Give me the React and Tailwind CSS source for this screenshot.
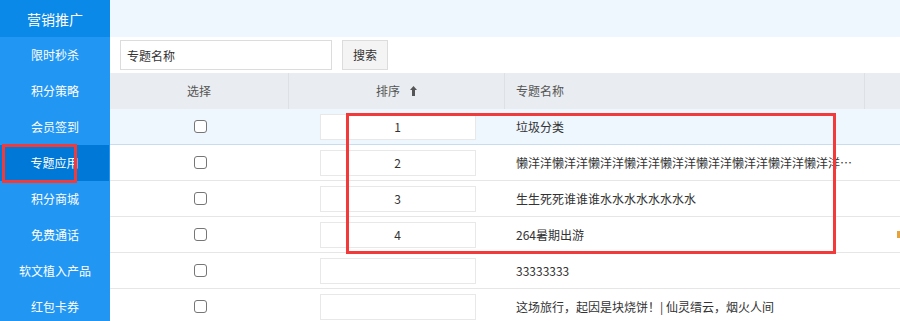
import React from 'react';

const menu = ['限时秒杀', '积分策略', '会员签到', '专题应用', '积分商城', '免费通话', '软文植入产品', '红包卡券'];

const rows = [
  { sort: '1', name: '垃圾分类' },
  { sort: '2', name: '懒洋洋懒洋洋懒洋洋懒洋洋懒洋洋懒洋洋懒洋洋懒洋洋懒洋洋懒洋洋懒洋洋懒洋洋' },
  { sort: '3', name: '生生死死谁谁谁水水水水水水水水' },
  { sort: '4', name: '264暑期出游', mark: true },
  { sort: '', name: '33333333' },
  { sort: '', name: '这场旅行，起因是块烧饼！| 仙灵缙云，烟火人间' },
];

const App = () => {
  return (
    <div className="relative flex h-[321px] w-[900px] overflow-hidden bg-white font-['Noto_Sans_CJK_SC',sans-serif] text-xs text-[#333]">
      {/* sidebar */}
      <div className="w-[110px] shrink-0 bg-[#2196f3] text-white">
        <div className="flex h-[37px] items-center justify-center bg-[#0b89e8] text-sm">营销推广</div>
        {menu.map((m) => (
          <div
            key={m}
            className={
              m === '专题应用'
                ? 'flex h-[36px] items-center justify-center bg-[#0078d8] mr-px'
                : 'flex h-[36px] items-center justify-center'
            }
          >
            {m}
          </div>
        ))}
      </div>

      {/* main */}
      <div className="flex-1 flex flex-col">
        <div className="h-[37px] shrink-0 bg-[#eef6fe]"></div>
        <div className="flex h-[36px] shrink-0 items-center gap-[10px] pl-[10px]">
          <input
            defaultValue="专题名称"
            className="h-[30px] w-[212px] border border-[#dcdcdc] px-[6px] text-xs text-[#333] outline-none"
          />
          <button className="h-[30px] w-[46px] border border-[#dcdcdc] bg-[#f4f4f4] text-xs text-[#333]">搜索</button>
        </div>

        <div className="flex h-[36px] shrink-0 items-center bg-[#e9ecf0] text-[#555]">
          <div className="flex h-full w-[179px] items-center justify-center border-r border-[#dde1e6]">选择</div>
          <div className="flex h-full w-[216px] items-center justify-center gap-[10px] border-r border-[#dde1e6]">
            <span>排序</span>
            <svg width="7" height="10" viewBox="0 0 7 10">
              <path d="M3.5 0 L7 4 L5 4 L5 10 L2 10 L2 4 L0 4 Z" fill="#555" />
            </svg>
          </div>
          <div className="flex h-full w-[360px] items-center border-r border-[#dde1e6] pl-[11px]">专题名称</div>
          <div className="flex-1"></div>
        </div>

        {rows.map((r, i) => (
          <div
            key={i}
            className={
              i === 0
                ? 'flex h-[36px] shrink-0 items-center border-b border-[#c8dcee] bg-[#eef6fe]'
                : 'flex h-[36px] shrink-0 items-center border-b border-[#e6e6e6]'
            }
          >
            <div className="flex w-[180px] justify-center pl-px">
              <span className="block h-[13px] w-[13px] rounded-[3px] border border-[#767676] bg-white"></span>
            </div>
            <div className="flex w-[215px] justify-center">
              <div className="flex h-[26px] w-[156px] items-center justify-center border border-[#e8e8e8] bg-white">{r.sort}</div>
            </div>
            <div className="w-[360px] truncate pl-[11px] pr-[12px]">{r.name}</div>
            <div className="flex flex-1 justify-end">
              {r.mark && <span className="block h-[7px] w-[3px] bg-[#e6a23c]"></span>}
            </div>
          </div>
        ))}
      </div>

      {/* annotations */}
      <div className="absolute left-[2px] top-[144px] h-[39px] w-[75px] border-[3px] border-[#f33a3a]"></div>
      <div className="absolute left-[346px] top-[113px] h-[141px] w-[490px] border-[3px] border-[#f33a3a]"></div>
    </div>
  );
};

export default App;
